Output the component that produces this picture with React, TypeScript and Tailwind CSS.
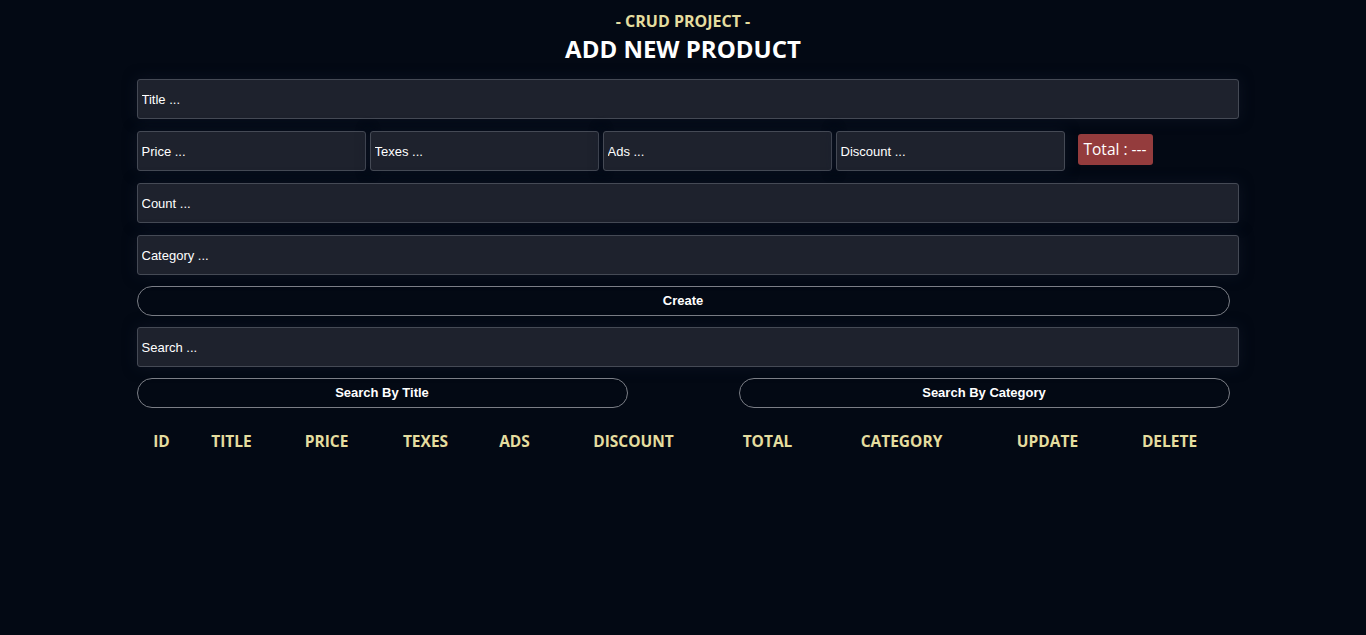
const inputCls =
  "h-10 rounded-[3px] border border-[#454a55] bg-[#1e222d] px-[4px] text-[13px] text-white placeholder:text-white outline-none shadow-[0_0_14px_rgba(20,28,45,0.55)] font-['Liberation_Sans',Arial,sans-serif]"

const btnCls =
  "h-[30px] rounded-full border border-[#7b7e86] bg-transparent text-[13px] font-bold text-white font-['Liberation_Sans',Arial,sans-serif]"

const columns: { label: string; w: string }[] = [
  { label: "ID", w: "w-[50px]" },
  { label: "TITLE", w: "w-[90px]" },
  { label: "PRICE", w: "w-[100px]" },
  { label: "TEXES", w: "w-[98px]" },
  { label: "ADS", w: "w-[80px]" },
  { label: "DISCOUNT", w: "w-[158px]" },
  { label: "TOTAL", w: "w-[110px]" },
  { label: "CATEGORY", w: "w-[158px]" },
  { label: "UPDATE", w: "w-[134px]" },
  { label: "DELETE", w: "w-[110px]" },
]

export default function App() {
  return (
    <div className="min-h-[635px] w-full bg-[#030914] font-['Open_Sans','Noto_Sans',sans-serif]">
      <div className="mx-auto w-[1093px] pt-[11px]">
        {/* head */}
        <div className="flex flex-col items-center">
          <h3 className="text-[16px] leading-[20px] font-bold text-[#e5dd9f]">- CRUD PROJECT -</h3>
          <h2 className="mt-[3px] text-[24px] leading-[30px] font-bold text-white">ADD NEW PRODUCT</h2>
        </div>

        {/* inputs */}
        <div className="mt-[15px] flex flex-col gap-[12px]">
          <input className={`${inputCls} w-[1102px]`} placeholder="Title ..." />
          <div className="flex items-start">
            <div className="flex gap-[4px]">
              <input className={`${inputCls} w-[229px]`} placeholder="Price ..." />
              <input className={`${inputCls} w-[229px]`} placeholder="Texes ..." />
              <input className={`${inputCls} w-[229px]`} placeholder="Ads ..." />
              <input className={`${inputCls} w-[229px]`} placeholder="Discount ..." />
            </div>
            <small className="mt-[3px] ml-[13px] flex h-[31px] items-center rounded-[3px] bg-[#943c3d] px-[6px] text-[15.5px] text-white">
              Total : ---
            </small>
          </div>
          <input className={`${inputCls} w-[1102px]`} placeholder="Count ..." />
          <input className={`${inputCls} w-[1102px]`} placeholder="Category ..." />
        </div>

        <button className={`${btnCls} mt-[11px] w-full`}>Create</button>

        {/* search */}
        <div className="mt-[11px]">
          <input className={`${inputCls} w-[1102px]`} placeholder="Search ..." />
          <div className="mt-[11px] flex justify-between">
            <button className={`${btnCls} w-[491px]`}>Search By Title</button>
            <button className={`${btnCls} w-[491px]`}>Search By Category</button>
          </div>
        </div>

        {/* table */}
        <div className="mt-[22px] flex text-[15.5px] font-bold text-[#e5dd9f]">
          {columns.map((c) => (
            <div key={c.label} className={`${c.w} text-center leading-[22px]`}>
              {c.label}
            </div>
          ))}
        </div>
      </div>
    </div>
  )
}
